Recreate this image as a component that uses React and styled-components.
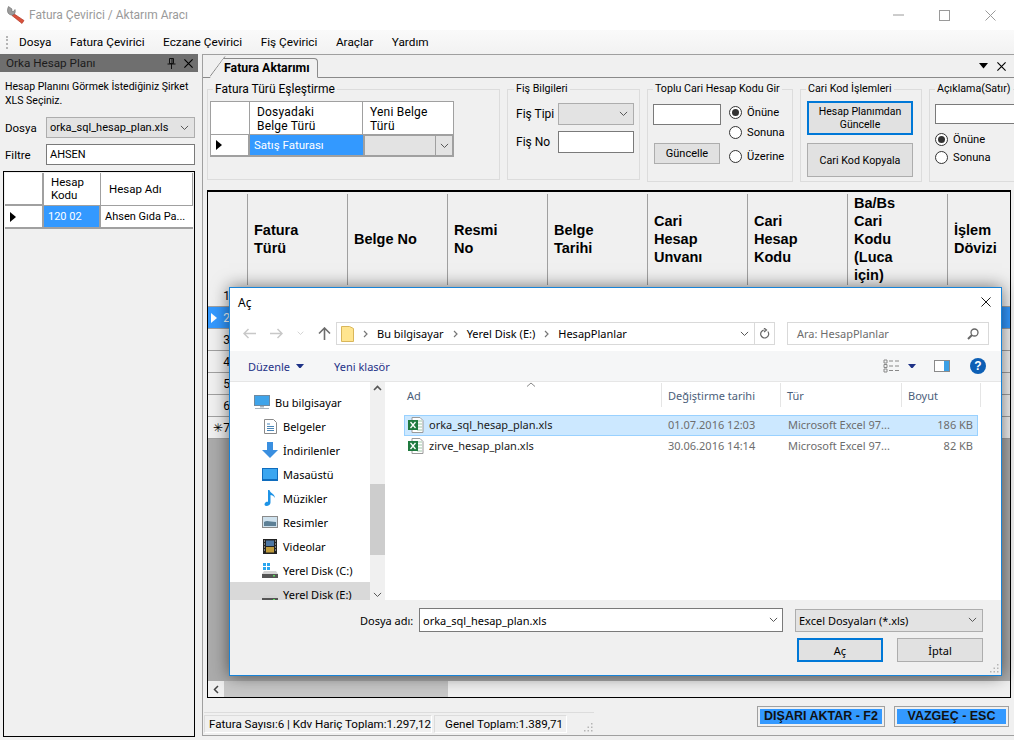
import styled, { createGlobalStyle } from 'styled-components'

const Global = createGlobalStyle`
  html, body { margin: 0; padding: 0; background: #f0f0f0; }
  * { box-sizing: border-box; }
  body { font-family: Roboto, "Noto Sans", sans-serif; font-size: 12px; color: #000; }
`

const Page = styled.div`
  position: relative;
  width: 1014px;
  height: 740px;
  overflow: hidden;
  display: flex;
  flex-direction: column;
  background: #f0f0f0;
`
const TitleBar = styled.div`
  height: 30px;
  background: #fff;
  display: flex;
  align-items: center;
  padding-left: 7px;
  color: #9a9a9a;
  font-size: 12px;
  gap: 4px;
`
const WinControls = styled.div`
  margin-left: auto;
  display: flex;
  align-items: center;
  gap: 35px;
  padding-right: 18px;
`
const MenuBar = styled.div`
  height: 24px;
  background: linear-gradient(#fafafa, #f2f2f2);
  display: flex;
  align-items: center;
  padding-left: 6px;
  gap: 18.5px;
`
const Grip = styled.div`
  width: 2px;
  height: 13px;
  margin-right: -7.5px;
  border-left: 2px dotted #b5b5b5;
`
const MenuItem = styled.span`
  font-size: 11.8px;
`
const Body = styled.div`
  flex: 1;
  display: flex;
  min-height: 0;
`
const LeftPanel = styled.aside`
  width: 202px;
  padding-right: 4px;
  display: flex;
  flex-direction: column;
`
const DockHead = styled.div`
  height: 18px;
  background: #6f6f6f;
  color: #1c1c1c;
  display: flex;
  align-items: center;
  padding: 0 5px 0 6px;
  font-size: 11.7px;
  justify-content: space-between;
`
const DockIcons = styled.div`
  display: flex;
  gap: 8px;
  align-items: center;
`
const Hint = styled.p`
  margin: 8px 0 10px 5px;
  line-height: 13.5px;
  font-size: 10.5px;
  height: 27px;
  white-space: nowrap;
`
const FieldRow = styled.div`
  display: flex;
  align-items: center;
  padding-left: 5px;
  margin-bottom: 6px;
  height: 21px;
  label { width: 41px; font-size: 11.5px; }
`
const ComboBox = styled.div`
  width: ${p => p.$w}px;
  height: ${p => p.$h || 21}px;
  margin-left: ${p => p.$ml || 0}px;
  background: #e3e3e3;
  border: 1px solid #adadad;
  display: flex;
  align-items: center;
  justify-content: space-between;
  padding: 0 5px 0 3px;
  font-size: 11px;
  white-space: nowrap;
`
const TextBox = styled.div`
  width: ${p => p.$w}px;
  height: ${p => p.$h || 21}px;
  background: #fff;
  border: 1px solid #7a7a7a;
  padding: 0 4px 0 3px;
  font-size: 11px;
  display: flex;
  align-items: center;
  justify-content: space-between;
`
const LeftGrid = styled.div`
  width: 192px;
  flex: 1;
  margin: 0 0 3px 3px;
  border: 1px solid #000;
  padding: 1px;
`
const CellGrid = styled.div`
  display: grid;
  width: ${p => (p.$w ? `${p.$w}px` : 'auto')};
  grid-template-columns: ${p => p.$cols};
  background: ${p => p.$bg || '#fff'};
`
const HeadCell = styled.div`
  border-right: 1px solid #a0a0a0;
  border-bottom: 1px solid #a0a0a0;
  padding-left: ${p => p.$pad || 7}px;
  display: flex;
  align-items: center;
  line-height: 13px;
  font-size: 11.5px;
  background: #fff;
`
const RowHead = styled(HeadCell)`
  height: ${p => p.$h}px;
  padding-left: 5px;
  border-right: 2px solid #a0a0a0;
  border-bottom: 2px solid #a0a0a0;
  border-left: ${p => (p.$lead ? '1px solid #a0a0a0' : '0')};
`
const DataCell = styled.div`
  padding-left: 4px;
  display: flex;
  align-items: center;
  white-space: nowrap;
  overflow: hidden;
  font-size: ${p => p.$fs || 11}px;
  border-bottom: 2px solid #a0a0a0;
  border-right: ${p => (p.$edge ? '2px solid #a0a0a0' : '0')};
  background: ${p => (p.$on ? '#3399ff' : '#fff')};
  color: ${p => (p.$on ? '#fff' : '#000')};
`
const Main = styled.main`
  flex: 1;
  border-left: 1px solid #a0a0a0;
  border-top: 1px solid #a0a0a0;
  border-bottom: 1px solid #a0a0a0;
  margin-bottom: 4px;
  display: flex;
  flex-direction: column;
  min-width: 0;
`
const TabStrip = styled.div`
  height: 23px;
  flex: none;
  border-bottom: 1px solid #8a8a8a;
  display: flex;
  align-items: flex-end;
  padding-left: 7px;
  position: relative;
`
const Tab = styled.div`
  width: 108px;
  height: 20px;
  margin-bottom: -1px;
  background: #f0f0f0;
  border: 1px solid #8a8a8a;
  border-bottom: 1px solid #f0f0f0;
  border-left: 0;
  border-radius: 0 4px 0 0;
  font-weight: 700;
  font-size: 12.3px;
  display: flex;
  align-items: center;
  padding-left: 14px;
  clip-path: polygon(14px 0, 100% 0, 100% 100%, 0 100%);
`
const TabDiag = styled.svg`
  position: absolute;
  left: 7px;
  bottom: 0;
`
const TabTools = styled.div`
  margin-left: auto;
  align-self: center;
  display: flex;
  gap: 9px;
  align-items: center;
  padding-right: 8px;
`
const Groups = styled.div`
  display: flex;
  gap: 7px;
  padding-left: 4px;
  margin-top: 4px;
  height: 100px;
  flex: none;
  overflow: hidden;
`
const Group = styled.fieldset`
  margin: 0;
  padding: 0;
  flex: none;
  width: ${p => p.$w}px;
  height: ${p => p.$h}px;
  min-width: 0;
  border: 1px solid #dcdcdc;
  position: relative;
  legend {
    margin-left: ${p => p.$lg || 5}px;
    padding: 0 2px;
    font-size: ${p => p.$fs || 10.7}px;
    line-height: 14px;
    white-space: nowrap;
  }
`
const GroupInner = styled.div`
  display: flex;
  flex-direction: column;
  padding: ${p => p.$pad};
  gap: ${p => p.$gap || 6}px;
`
const MapHead = styled.div`
  height: 34px;
  line-height: 14px;
  font-size: 12px;
  letter-spacing: 0.2px;
  padding: 3px 0 0 7px;
  border-right: 1px solid #a0a0a0;
  border-left: ${p => (p.$lead ? '1px solid #a0a0a0' : '0')};
  border-top: 1px solid #a0a0a0;
  border-bottom: 1px solid #a0a0a0;
  background: #fff;
`
const InlineRow = styled.div`
  display: flex;
  align-items: center;
  label { width: ${p => p.$lw || 42}px; font-size: 12px; }
`
const Columns = styled.div`
  display: flex;
  gap: ${p => p.$gap}px;
  padding: ${p => p.$pad};
`
const Stack = styled.div`
  display: flex;
  flex-direction: column;
  gap: ${p => p.$gap || 0}px;
  padding-top: ${p => p.$top || 0}px;
  align-items: flex-start;
`
const Btn = styled.div`
  width: ${p => p.$w}px;
  height: ${p => p.$h}px;
  margin-left: ${p => p.$ml || 0}px;
  background: #e1e1e1;
  border: ${p => (p.$focus ? '2px solid #0078d7' : '1px solid #adadad')};
  display: flex;
  align-items: center;
  justify-content: center;
  text-align: center;
  font-size: ${p => p.$fs || 11}px;
  line-height: 13px;
`
const RadioRow = styled.div`
  display: flex;
  align-items: center;
  gap: 5px;
  height: ${p => p.$h || 20}px;
  font-size: 11.2px;
`
const RadioDot = styled.span`
  width: 13px;
  height: 13px;
  border-radius: 50%;
  background: #fff;
  border: 1px solid #333;
  display: flex;
  align-items: center;
  justify-content: center;
  &::after {
    content: '';
    width: 7px;
    height: 7px;
    border-radius: 50%;
    background: ${p => (p.$on ? '#333' : 'transparent')};
  }
`
const Sheet = styled.div`
  margin: 8px 0 0 4px;
  width: 804px;
  height: 508px;
  flex: none;
  border: 1px solid #000;
  border-top-width: 2px;
  background: #ababab;
  display: flex;
  flex-direction: column;
  position: relative;
  overflow: hidden;
`
const SheetHead = styled.div`
  display: grid;
  grid-template-columns: 40px repeat(8, 100px);
  height: 93px;
  flex: none;
  background: #f0f0f0;
`
const SheetCol = styled.div`
  font: 700 14.5px/18px "Liberation Sans", Arial, sans-serif;
  border-right: 1px solid #a0a0a0;
  margin-top: 2px;
  padding: 0 0 2px 6px;
  display: flex;
  align-items: center;
  white-space: pre-line;
`
const SheetRow = styled.div`
  display: grid;
  grid-template-columns: 40px 1fr;
  height: 22px;
  background: ${p => (p.$on ? '#3399ff' : '#f0f0f0')};
  border-bottom: 1px solid #a0a0a0;
  font-size: 12px;
`
const RowNo = styled.div`
  display: flex;
  align-items: center;
  justify-content: flex-end;
  gap: 6px;
  padding-right: 18px;
  color: ${p => (p.$on ? '#fff' : '#000')};
  font-size: 12px;
`
const HScroll = styled.div`
  margin-top: auto;
  height: 16px;
  background: #f0f0f0;
  display: flex;
  align-items: center;
  padding-left: 5px;
  gap: 5px;
  flex: none;
`
const HThumb = styled.div`
  width: 224px;
  height: 16px;
  background: #c8c8c8;
`
const Bottom = styled.div`
  flex: 1;
  display: flex;
  align-items: flex-start;
  padding: 8px 0 0 1px;
`
const Status = styled.div`
  margin-top: 6px;
  width: 390px;
  height: 21px;
  padding-top: 2px;
  border-top: 1px solid #dcdcdc;
  display: flex;
  gap: 2px;
  font-size: 11.6px;
  position: relative;
`
const StatusPart = styled.div`
  width: ${p => p.$w}px;
  height: 18px;
  border: 1px solid #dcdcdc;
  border-bottom-color: #fff;
  border-right-color: #fff;
  display: flex;
  align-items: center;
  padding-left: ${p => p.$pad}px;
  white-space: nowrap;
`
const StatusGrip = styled.svg`
  position: absolute;
  right: 1px;
  bottom: 1px;
`
const ActionBtn = styled.div`
  width: ${p => p.$w}px;
  height: 21px;
  border: 1px solid #a0a0a0;
  padding: 2px;
  background: #f0f0f0;
  margin-left: ${p => p.$ml}px;
  font: 700 12.5px/15px "Liberation Sans", Arial, sans-serif;
  span {
    display: flex;
    width: 100%;
    height: 100%;
    background: #3399ff;
    color: #111;
    align-items: center;
    justify-content: center;
    white-space: nowrap;
  }
`
const Dialog = styled.section`
  position: absolute;
  left: 229px;
  top: 287px;
  width: 773px;
  height: 389px;
  background: #fff;
  border: 1px solid #1883d7;
  box-shadow: 0 0 16px rgba(0, 0, 0, 0.55);
  display: flex;
  flex-direction: column;
  font-family: "Noto Sans", Roboto, sans-serif;
  font-size: 11px;
  overflow: hidden;
`
const DlgTitle = styled.div`
  height: 28px;
  flex: none;
  display: flex;
  align-items: center;
  justify-content: space-between;
  padding: 0 10px 0 8px;
  font-size: 12px;
`
const NavRow = styled.div`
  height: 35px;
  flex: none;
  display: flex;
  align-items: flex-start;
  padding-top: 6px;
`
const NavArrows = styled.div`
  width: 106px;
  height: 22px;
  display: flex;
  align-items: center;
  padding-left: 13px;
  gap: 14px;
`
const AddressBox = styled.div`
  width: 439px;
  height: 23px;
  border: 1px solid #d9d9d9;
  display: flex;
  align-items: center;
  padding-left: 4px;
`
const Crumb = styled.span`
  display: flex;
  align-items: center;
  gap: 9px;
  margin-left: 9px;
  white-space: nowrap;
`
const AddrEnd = styled.div`
  margin-left: auto;
  display: flex;
  align-items: center;
  height: 100%;
  gap: 5px;
`
const RefreshCell = styled.div`
  width: 20px;
  height: 100%;
  border-left: 1px solid #d9d9d9;
  display: flex;
  align-items: center;
  justify-content: center;
`
const SearchBox = styled.div`
  width: 202px;
  height: 23px;
  margin-left: 12px;
  border: 1px solid #d9d9d9;
  display: flex;
  align-items: center;
  justify-content: space-between;
  padding: 0 9px;
  color: #6d6d6d;
`
const ToolRow = styled.div`
  height: 31px;
  flex: none;
  background: #f5f6f7;
  border-bottom: 1px solid #e6e6e6;
  display: flex;
  align-items: center;
  padding-left: 18px;
  color: #1e3287;
`
const ToolCaret = styled.span`
  display: flex;
  margin: ${p => p.$m};
`
const ToolEnd = styled.div`
  margin-left: auto;
  display: flex;
  align-items: center;
  padding-right: 15px;
`
const HelpBadge = styled.span`
  width: 16px;
  height: 16px;
  margin-left: 20px;
  border-radius: 50%;
  background: #0d5fb5;
  color: #fff;
  font: 700 12px/16px "Liberation Sans", Arial, sans-serif;
  text-align: center;
`
const Panes = styled.div`
  height: 218px;
  flex: none;
  display: flex;
`
const NavPane = styled.div`
  width: 140px;
  flex: none;
  padding-top: 8px;
  overflow: hidden;
`
const NavItem = styled.div`
  height: 24px;
  display: flex;
  align-items: center;
  gap: 5px;
  padding-left: ${p => (p.$root ? 24 : 32)}px;
  white-space: nowrap;
  background: ${p => (p.$on ? '#d9d9d9' : 'transparent')};
`
const IconSlot = styled.span`
  width: 16px;
  height: 16px;
  display: flex;
  align-items: center;
  justify-content: center;
`
const VScroll = styled.div`
  width: 15px;
  flex: none;
  background: #f0f0f0;
  display: flex;
  flex-direction: column;
  align-items: center;
  justify-content: space-between;
  padding: 3px 0 3px;
  position: relative;
`
const VThumb = styled.div`
  position: absolute;
  left: 0;
  top: 102px;
  width: 15px;
  height: 71px;
  background: #cdcdcd;
`
const FileList = styled.div`
  flex: 1;
  margin-left: 3px;
  position: relative;
`
const ListHead = styled.div`
  display: grid;
  grid-template-columns: 274px 119px 121px 79px;
  height: 24px;
  margin-top: 1px;
  color: #4c607a;
`
const ListCol = styled.div`
  border-right: 1px solid #e5e5e5;
  display: flex;
  align-items: center;
  padding-left: ${p => p.$pad || 6}px;
`
const SortMark = styled.svg`
  position: absolute;
  left: 138px;
  top: 0;
`
const FileRow = styled.div`
  display: grid;
  grid-template-columns: 263px 120px 110px 79px;
  height: ${p => p.$h}px;
  margin: ${p => p.$mt}px 0 0 16px;
  padding-bottom: 2px;
  width: 574px;
  align-items: center;
  background: ${p => (p.$on ? '#cce8ff' : 'transparent')};
  border: 1px solid ${p => (p.$on ? '#99d1ff' : 'transparent')};
  color: #6d6d6d;
  white-space: nowrap;
`
const FileName = styled.div`
  display: flex;
  align-items: center;
  gap: 5px;
  padding-left: 3px;
  color: #1a1a1a;
`
const Size = styled.div`
  text-align: right;
  padding-right: 4px;
`
const DlgFoot = styled.div`
  flex: 1;
  background: #f0f0f0;
  position: relative;
  display: flex;
  flex-direction: column;
  padding: 8px 0 0 0;
`
const FootRow = styled.div`
  display: flex;
  align-items: center;
  margin-left: 130px;
`
const FootLabel = styled.label`
  width: 59px;
  white-space: nowrap;
`
const FootBtns = styled.div`
  display: flex;
  gap: 14px;
  margin: 6px 0 0 567px;
`
const ResizeGrip = styled.svg`
  position: absolute;
  right: 2px;
  bottom: 2px;
`
const ComboWrap = styled.div`
  display: flex;
  border: 2px solid #a0a0a0;
  border-top-width: 1px;
  height: 22px;
  background: #e3e3e3;
`
const ComboFace = styled.div`
  flex: 1;
`
const ComboArrow = styled.div`
  width: 17px;
  border-left: 1px solid #a0a0a0;
  display: flex;
  align-items: center;
  justify-content: center;
`

const Chevron = ({ color = '#555', size = 9 }) => (
  <svg width={size} height={size * 0.6} viewBox="0 0 10 6"><path d="M1 1l4 4 4-4" fill="none" stroke={color} strokeWidth="1.1" /></svg>
)
const Caret = ({ color = '#000', w = 8 }) => (
  <svg width={w} height={w * 0.6} viewBox="0 0 10 6"><path d="M0 0h10L5 6z" fill={color} /></svg>
)
const RowPointer = ({ color = '#000' }) => (
  <svg width="6" height="10" viewBox="0 0 6 10"><path d="M0 0l6 5-6 5z" fill={color} /></svg>
)
const CloseX = ({ size = 11, color = '#000', w = 1.4 }) => (
  <svg width={size} height={size} viewBox="0 0 11 11"><path d="M.5.5l10 10M10.5.5l-10 10" stroke={color} strokeWidth={w} fill="none" /></svg>
)
const Pin = () => (
  <svg width="9" height="11" viewBox="0 0 9 11"><path d="M2.5.5h4v5h-4zM5 1v4.500M.5 6h8M4.500 6v5" fill="none" stroke="#111" /></svg>
)
const WrenchIcon = () => (
  <svg width="18" height="18" viewBox="0 0 18 18">
    <path d="M6.500 7.500L17 14.500 15 17.500 5 9.500z" fill="#d9533c" stroke="#a8291b" strokeWidth=".6" />
    <path d="M1.500.5L5 3l-.5 2 2 .5L8 3.500c.8 2.500-.2 5-2.200 5.500C3.500 9.500.6 8 .5 5 .4 3.500.7 2 1.500.5z" fill="#9c9c9c" stroke="#6a6a6a" strokeWidth=".6" />
  </svg>
)
const ExcelIcon = () => (
  <svg width="16" height="16" viewBox="0 0 16 16">
    <path d="M4 .5h8l3 3v12H4z" fill="#fff" stroke="#9a9a9a" />
    <path d="M9 4h5M9 7h5M9 10h5M9 13h5" stroke="#9fc7a8" />
    <rect x="0" y="3" width="10" height="10" fill="#1f7a3f" />
    <path d="M2.500 5l5 6M7.500 5l-5 6" stroke="#fff" strokeWidth="1.300" />
  </svg>
)
const PcIcon = () => (
  <svg width="16" height="16" viewBox="0 0 16 16">
    <rect x=".5" y="1.500" width="15" height="10" fill="#3fa4ea" stroke="#6f8aa0" />
    <path d="M6 12h4v1.500H6z" fill="#a9b4bd" /><path d="M1 14.500h14" stroke="#a9b4bd" />
  </svg>
)
const DocIcon = () => (
  <svg width="13" height="15" viewBox="0 0 13 15">
    <path d="M.5.500h9l3 3v11H.5z" fill="#fff" stroke="#8a8a8a" />
    <path d="M3 5h3M3 7.500h7M3 9.500h7M3 11.500h7" stroke="#4a86b8" />
  </svg>
)
const DownIcon = () => (
  <svg width="16" height="16" viewBox="0 0 16 16"><path d="M5 0h6v8h5l-8 8-8-8h5z" fill="#3a8fe0" /></svg>
)
const DesktopIcon = () => (
  <svg width="16" height="13" viewBox="0 0 16 13"><rect width="16" height="13" fill="#0f6cbd" /><rect x="1" y="1" width="14" height="10" fill="#3ba6f0" /></svg>
)
const MusicIcon = () => (
  <svg width="12" height="16" viewBox="0 0 12 16"><path d="M4 0h1.500c.5 3 5 3.500 5.500 8-1-2-3-3-4.500-3v7.500c0 2-2 3.500-4 3.500S0 14.500 1 13s2-1.500 3-1.200z" fill="#1e93e6" /></svg>
)
const PhotoIcon = () => (
  <svg width="16" height="12" viewBox="0 0 16 12">
    <rect x=".5" y=".5" width="15" height="11" fill="#cfe2ee" stroke="#8a8a8a" />
    <path d="M2 6c3-2 6 0 12 0v4H2z" fill="#5d8096" />
  </svg>
)
const VideoIcon = () => (
  <svg width="14" height="15" viewBox="0 0 14 15">
    <rect width="14" height="15" fill="#222" />
    <rect x="3" y="1.500" width="8" height="5.500" fill="#4d77a5" /><rect x="3" y="8" width="8" height="5.500" fill="#c09c3c" />
    <path d="M1 2h1M1 5h1M1 8h1M1 11h1M12 2h1M12 5h1M12 8h1M12 11h1" stroke="#ddd" />
  </svg>
)
const DiskIcon = ({ win }) => (
  <svg width="16" height="15" viewBox="0 0 16 15">
    {win && <path d="M1 0h3v3H1zM5 0h3v3H5zM1 4h3v3H1zM5 4h3v3H5z" fill="#2aa6ef" />}
    <path d="M2 8h12l2 3H0z" fill="#d4d4d4" /><rect y="11" width="16" height="4" fill="#555" /><rect x="11" y="12" width="2" height="1.500" fill="#5ddc5d" />
  </svg>
)
const DotGrip = () => (
  <path d="M8 1h1.500v1.500H8zM4.500 4.500H6V6H4.500zM8 4.500h1.500V6H8zM1 8h1.500v1.500H1zM4.500 8H6v1.500H4.500zM8 8h1.500v1.500H8z" fill="#b5b5b5" />
)

const navItems = [
  ['Belgeler', <DocIcon key="d" />],
  ['İndirilenler', <DownIcon key="i" />],
  ['Masaüstü', <DesktopIcon key="m" />],
  ['Müzikler', <MusicIcon key="u" />],
  ['Resimler', <PhotoIcon key="r" />],
  ['Videolar', <VideoIcon key="v" />],
]
const sheetCols = ['Fatura\nTürü', 'Belge No', 'Resmi\nNo', 'Belge\nTarihi', 'Cari\nHesap\nUnvanı', 'Cari\nHesap\nKodu', 'Ba/Bs\nCari\nKodu\n(Luca\niçin)', 'İşlem\nDövizi']

const Crumbs = ['Bu bilgisayar', 'Yerel Disk (E:)', 'HesapPlanlar']

function OpenDialog() {
  return (
    <Dialog>
      <DlgTitle>
        <span>Aç</span>
        <CloseX size={10} w={1} />
      </DlgTitle>
      <NavRow>
        <NavArrows>
          <svg width="13" height="11" viewBox="0 0 13 11"><path d="M13 5.500H1M5.500 1L1 5.500 5.500 10" fill="none" stroke="#c8c8c8" strokeWidth="1.500" /></svg>
          <svg width="13" height="11" viewBox="0 0 13 11"><path d="M0 5.500h12M7.500 1L12 5.500 7.500 10" fill="none" stroke="#c8c8c8" strokeWidth="1.500" /></svg>
          <Chevron color="#c8c8c8" size={7} />
          <svg width="13" height="13" viewBox="0 0 13 13"><path d="M6.500 13V1M1 6.500L6.500 1 12 6.500" fill="none" stroke="#6d6d6d" strokeWidth="1.600" /></svg>
        </NavArrows>
        <AddressBox>
          <svg width="13" height="16" viewBox="0 0 13 16"><path d="M.5.500h8l4 2v13H.5z" fill="#ffe58f" stroke="#d9b65a" /></svg>
          {Crumbs.map(c => (
            <Crumb key={c}>
              <svg width="5" height="8" viewBox="0 0 5 8"><path d="M1 1l3 3-3 3" fill="none" stroke="#777" strokeWidth="1.200" /></svg>
              {c}
            </Crumb>
          ))}
          <AddrEnd>
            <Chevron color="#555" />
            <RefreshCell>
              <svg width="11" height="12" viewBox="0 0 11 12"><path d="M8.800 3.500a4 4 0 1 1-3.300-1.500M5 0l2.500 2L5 4" fill="none" stroke="#666" strokeWidth="1.200" /></svg>
            </RefreshCell>
          </AddrEnd>
        </AddressBox>
        <SearchBox>
          <span>Ara: HesapPlanlar</span>
          <svg width="12" height="12" viewBox="0 0 12 12"><circle cx="7.500" cy="4.500" r="3.500" fill="none" stroke="#666" strokeWidth="1.300" /><path d="M5 7l-4 4" stroke="#666" strokeWidth="2" /></svg>
        </SearchBox>
      </NavRow>
      <ToolRow>
        <span>Düzenle</span>
        <ToolCaret $m="0 30px 0 6px"><Caret color="#1e3287" /></ToolCaret>
        <span>Yeni klasör</span>
        <ToolEnd>
          <svg width="16" height="14" viewBox="0 0 16 14"><path d="M1 1h3v3H1zM1 5.500h3v3H1zM1 10h3v3H1z" fill="none" stroke="#888" /><path d="M6 2h4M12 2h4M6 7h4M12 7h4M6 11.500h4M12 11.500h4" stroke="#888" /></svg>
          <ToolCaret $m="0 18px 0 9px"><Caret color="#1e3287" /></ToolCaret>
          <svg width="16" height="12" viewBox="0 0 16 12"><rect x=".5" y=".5" width="15" height="11" fill="#fff" stroke="#8a8a8a" /><rect x="10" y="1" width="5" height="10" fill="#3ba0e6" /></svg>
          <HelpBadge>?</HelpBadge>
        </ToolEnd>
      </ToolRow>
      <Panes>
        <NavPane>
          <NavItem $root><PcIcon />Bu bilgisayar</NavItem>
          {navItems.map(([label, icon]) => (
            <NavItem key={label}><IconSlot>{icon}</IconSlot>{label}</NavItem>
          ))}
          <NavItem><IconSlot><DiskIcon win /></IconSlot>Yerel Disk (C:)</NavItem>
          <NavItem $on><IconSlot><DiskIcon /></IconSlot>Yerel Disk (E:)</NavItem>
        </NavPane>
        <VScroll>
          <svg width="9" height="6" viewBox="0 0 9 6"><path d="M1 5l3.500-3.500L8 5" fill="none" stroke="#555" strokeWidth="1.600" /></svg>
          <VThumb />
          <Chevron color="#555" />
        </VScroll>
        <FileList>
          <SortMark width="10" height="5" viewBox="0 0 10 5"><path d="M1 4.500L5 1l4 3.500" fill="none" stroke="#888" /></SortMark>
          <ListHead>
            <ListCol $pad={19}>Ad</ListCol>
            <ListCol>Değiştirme tarihi</ListCol>
            <ListCol>Tür</ListCol>
            <ListCol>Boyut</ListCol>
          </ListHead>
          <FileRow $on $h={21} $mt={8}>
            <FileName><ExcelIcon />orka_sql_hesap_plan.xls</FileName>
            <span>01.07.2016 12:03</span>
            <span>Microsoft Excel 97...</span>
            <Size>186 KB</Size>
          </FileRow>
          <FileRow $h={21} $mt={0}>
            <FileName><ExcelIcon />zirve_hesap_plan.xls</FileName>
            <span>30.06.2016 14:14</span>
            <span>Microsoft Excel 97...</span>
            <Size>82 KB</Size>
          </FileRow>
        </FileList>
      </Panes>
      <DlgFoot>
        <FootRow>
          <FootLabel>Dosya adı:</FootLabel>
          <TextBox $w={364} $h={24}>orka_sql_hesap_plan.xls<Chevron /></TextBox>
          <ComboBox $w={188} $h={23} $ml={12}>Excel Dosyaları (*.xls)<Chevron /></ComboBox>
        </FootRow>
        <FootBtns>
          <Btn $focus $w={86} $h={24}>Aç</Btn>
          <Btn $w={86} $h={24}>İptal</Btn>
        </FootBtns>
        <ResizeGrip width="10" height="10" viewBox="0 0 10 10"><DotGrip /></ResizeGrip>
      </DlgFoot>
    </Dialog>
  )
}

export default function App() {
  return (
    <Page>
      <Global />
      <TitleBar>
        <WrenchIcon />
        <span>Fatura Çevirici / Aktarım Aracı</span>
        <WinControls>
          <svg width="11" height="2" viewBox="0 0 11 2"><path d="M0 1h11" stroke="#9a9a9a" /></svg>
          <svg width="11" height="11" viewBox="0 0 11 11"><rect x=".5" y=".5" width="10" height="10" fill="none" stroke="#9a9a9a" /></svg>
          <CloseX color="#9a9a9a" w={1} />
        </WinControls>
      </TitleBar>
      <MenuBar>
        <Grip />
        {['Dosya', 'Fatura Çevirici', 'Eczane Çevirici', 'Fiş Çevirici', 'Araçlar', 'Yardım'].map(m => (
          <MenuItem key={m}>{m}</MenuItem>
        ))}
      </MenuBar>
      <Body>
        <LeftPanel>
          <DockHead>
            <span>Orka Hesap Planı</span>
            <DockIcons><Pin /><CloseX size={9} /></DockIcons>
          </DockHead>
          <Hint>Hesap Planını Görmek İstediğiniz Şirket<br />XLS Seçiniz.</Hint>
          <FieldRow>
            <label>Dosya</label>
            <ComboBox $w={149}>orka_sql_hesap_plan.xls<Chevron /></ComboBox>
          </FieldRow>
          <FieldRow>
            <label>Filtre</label>
            <TextBox $w={149}>AHSEN</TextBox>
          </FieldRow>
          <LeftGrid>
            <CellGrid $cols="39px 57px 1fr">
              <RowHead $h={33} />
              <HeadCell>Hesap<br />Kodu</HeadCell>
              <HeadCell $pad={8}>Hesap Adı</HeadCell>
              <RowHead $h={23}><RowPointer /></RowHead>
              <DataCell $on $edge>120 02</DataCell>
              <DataCell>Ahsen Gıda Pa...</DataCell>
            </CellGrid>
          </LeftGrid>
        </LeftPanel>
        <Main>
          <TabStrip>
            <TabDiag width="16" height="21" viewBox="0 0 16 21"><path d="M0 20.500L15 .5" stroke="#8a8a8a" fill="none" /></TabDiag>
            <Tab>Fatura Aktarımı</Tab>
            <TabTools><Caret w={9} /><CloseX size={9} /></TabTools>
          </TabStrip>
          <Groups>
            <Group $w={293} $h={98} $fs={12}>
              <legend>Fatura Türü Eşleştirme</legend>
              <GroupInner $pad="5px 0 0 2px">
                <CellGrid $w={245} $bg="#f0f0f0" $cols="40px 113px 91px">
                  <MapHead $lead />
                  <MapHead>Dosyadaki<br />Belge Türü</MapHead>
                  <MapHead>Yeni Belge<br />Türü</MapHead>
                  <RowHead $h={22} $lead><RowPointer /></RowHead>
                  <DataCell $on $fs={11.5}>Satış Faturası</DataCell>
                  <ComboWrap>
                    <ComboFace />
                    <ComboArrow><Chevron /></ComboArrow>
                  </ComboWrap>
                </CellGrid>
              </GroupInner>
            </Group>
            <Group $w={133} $h={98} $lg={6}>
              <legend>Fiş Bilgileri</legend>
              <GroupInner $pad="7px 0 0 8px" $gap={6}>
                <InlineRow><label>Fiş Tipi</label><ComboBox $w={76} $h={22}><span />
                  <Chevron /></ComboBox></InlineRow>
                <InlineRow><label>Fiş No</label><TextBox $w={76} $h={22} /></InlineRow>
              </GroupInner>
            </Group>
            <Group $w={146} $h={100}>
              <legend>Toplu Cari Hesap Kodu Gir</legend>
              <Columns $gap={8} $pad="6px 0 0 5px">
                <Stack $gap={18} $top={2}>
                  <TextBox $w={68} />
                  <Btn $w={66} $h={21} $ml={1}>Güncelle</Btn>
                </Stack>
                <Stack>
                  <RadioRow><RadioDot $on />Önüne</RadioRow>
                  <RadioRow><RadioDot />Sonuna</RadioRow>
                  <RadioRow $h={28}><RadioDot />Üzerine</RadioRow>
                </Stack>
              </Columns>
            </Group>
            <Group $w={122} $h={100}>
              <legend>Cari Kod İşlemleri</legend>
              <GroupInner $pad="5px 0 0 6px" $gap={8}>
                <Btn $focus $w={106} $h={34} $fs={10.5}>Hesap Planımdan<br />Güncelle</Btn>
                <Btn $w={106} $h={34} $fs={10.7}>Cari Kod Kopyala</Btn>
              </GroupInner>
            </Group>
            <Group $w={100} $h={100}>
              <legend>Açıklama(Satır)</legend>
              <GroupInner $pad="8px 0 0 5px" $gap={6}>
                <TextBox $w={90} $h={20} />
                <Stack>
                  <RadioRow $h={18}><RadioDot $on />Önüne</RadioRow>
                  <RadioRow $h={18}><RadioDot />Sonuna</RadioRow>
                </Stack>
              </GroupInner>
            </Group>
          </Groups>
          <Sheet>
            <SheetHead>
              <SheetCol />
              {sheetCols.map(c => <SheetCol key={c}>{c}</SheetCol>)}
            </SheetHead>
            {[1, 2, 3, 4, 5, 6, 7].map(n => (
              <SheetRow key={n} $on={n === 2}>
                <RowNo $on={n === 2}>
                  {n === 2 && <RowPointer color="#fff" />}
                  {n === 7 && '✳'}
                  {n}
                </RowNo>
              </SheetRow>
            ))}
            <HScroll>
              <svg width="6" height="9" viewBox="0 0 6 9"><path d="M5 1L1.500 4.500 5 8" fill="none" stroke="#444" strokeWidth="1.500" /></svg>
              <HThumb />
            </HScroll>
          </Sheet>
          <Bottom>
            <Status>
              <StatusPart $w={228} $pad={4}>Fatura Sayısı:6 | Kdv Hariç Toplam:1.297,12</StatusPart>
              <StatusPart $w={133} $pad={10}>Genel Toplam:1.389,71</StatusPart>
              <StatusGrip width="10" height="10" viewBox="0 0 10 10"><DotGrip /></StatusGrip>
            </Status>
            <ActionBtn $w={128} $ml={163}><span>DIŞARI AKTAR - F2</span></ActionBtn>
            <ActionBtn $w={115} $ml={9}><span>VAZGEÇ - ESC</span></ActionBtn>
          </Bottom>
        </Main>
      </Body>
      <OpenDialog />
    </Page>
  )
}
